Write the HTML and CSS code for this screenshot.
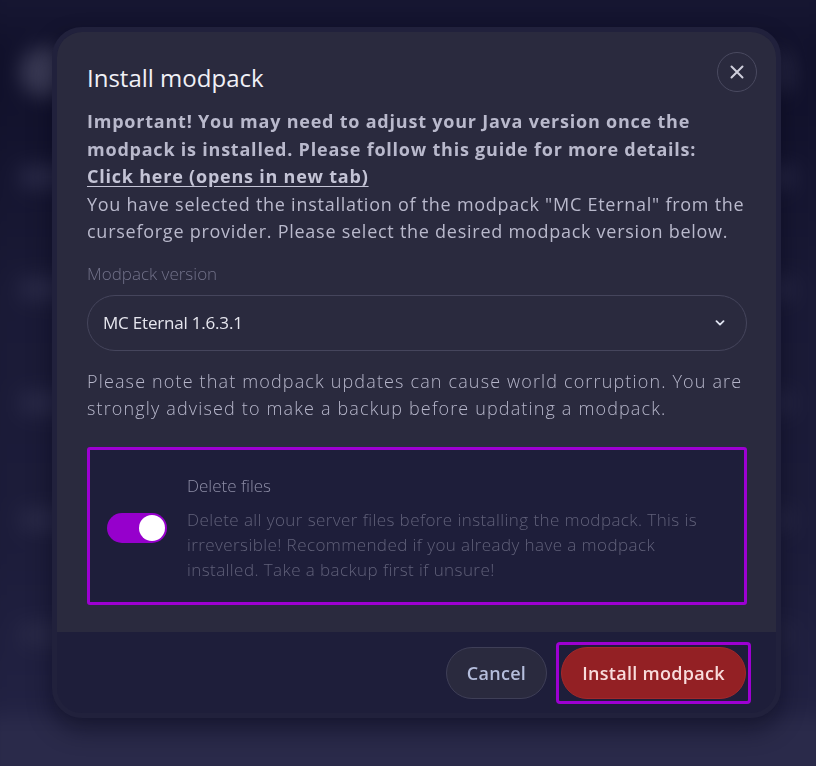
FILE: index.html
```html
<!DOCTYPE html>
<html lang="en">
<head>
<meta charset="utf-8">
<title>Install modpack</title>
<link rel="stylesheet" href="styles.css">
</head>
<body>
<div class="backdrop" aria-hidden="true">
  <div class="bg-row r1"><span class="blob b-circle"></span><span class="blob b-wide"></span></div>
  <div class="bg-row r2"><span class="blob b-line"></span><span class="blob b-line2"></span></div>
  <div class="bg-row r3"><span class="blob b-line"></span><span class="blob b-line2"></span></div>
  <div class="bg-row r4"><span class="blob b-line"></span><span class="blob b-line2"></span></div>
  <div class="bg-row r5"><span class="blob b-line"></span><span class="blob b-line2"></span></div>
  <div class="bg-row r6"><span class="blob b-line"></span><span class="blob b-line2"></span></div>
  <div class="bg-row r7"><span class="blob b-full"></span></div>
</div>

<div class="modal">
  <div class="modal-body">
    <div class="modal-head">
      <h2 class="title">Install modpack</h2>
      <button class="close" type="button" aria-label="Close">
        <svg width="14" height="14" viewBox="0 0 14 14"><path d="M1.5 1.5 L12.5 12.5 M12.5 1.5 L1.5 12.5" stroke="#cfcfdc" stroke-width="2" stroke-linecap="round"/></svg>
      </button>
    </div>
    <p class="info"><strong>Important! You may need to adjust your Java version once the modpack is installed. Please follow this guide for more details:<br><a href="#" class="link">Click here (opens in new tab)</a></strong><br>You have selected the installation of the modpack "MC Eternal" from the curseforge provider. Please select the desired modpack version below.</p>
    <label class="field-label">Modpack version</label>
    <div class="select">
      <span class="select-value">MC Eternal 1.6.3.1</span>
      <svg class="chevron" width="10" height="6" viewBox="0 0 10 6"><path d="M1.5 1.2 L5 4.6 L8.5 1.2" fill="none" stroke="#dfe3f0" stroke-width="1.8" stroke-linecap="round" stroke-linejoin="round"/></svg>
    </div>
    <p class="note">Please note that modpack updates can cause world corruption. You are strongly advised to make a backup before updating a modpack.</p>
    <div class="toggle-box">
      <span class="switch"><span class="knob"></span></span>
      <div class="toggle-text">
        <div class="toggle-title">Delete files</div>
        <div class="toggle-desc">Delete all your server files before installing the modpack. This is irreversible! Recommended if you already have a modpack installed. Take a backup first if unsure!</div>
      </div>
    </div>
  </div>
  <div class="modal-foot">
    <button class="btn cancel" type="button">Cancel</button>
    <span class="focus-ring"><button class="btn danger" type="button">Install modpack</button></span>
  </div>
</div>
</body>
</html>
```
FILE: styles.css
```css
* { box-sizing: border-box; }

html, body {
  margin: 0;
  height: 100%;
}

body {
  background: #13132d;
  font-family: "Open Sans", "Noto Sans", sans-serif;
  padding: 27px 0 0 52px;
  overflow: hidden;
}

/* blurred application behind the dialog */
.backdrop {
  position: fixed;
  inset: -20px;
  z-index: 0;
  display: flex;
  flex-direction: column;
  filter: blur(10px);
  background: linear-gradient(180deg, #181834 0%, #10102a 10%, #1a1a36 40%, #1c1c3a 70%, #242446 100%);
}
.bg-row {
  display: flex;
  align-items: center;
  gap: 40px;
  padding: 0 40px;
}
.r1 { height: 150px; padding-top: 40px; }
.r2 { height: 110px; }
.r3 { height: 125px; }
.r4 { height: 115px; }
.r5 { height: 130px; }
.r6 { height: 110px; }
.r7 { flex: 1; padding: 0; }
.blob { display: block; border-radius: 8px; background: #2c2c4a; }
.b-circle { width: 50px; height: 50px; border-radius: 50%; background: #3a3a55; }
.b-wide { flex: 1; height: 40px; background: #23233f; }
.b-line { width: 90px; height: 22px; background: #2a2a48; }
.b-line2 { flex: 1; height: 22px; background: #262644; }
.b-full { width: 100%; height: 70px; background: #2a2a4a; margin-top: 30px; }

/* dialog */
.modal {
  position: relative;
  z-index: 1;
  width: 729px;
  border: 5px solid #21213c;
  border-radius: 30px;
  background: #1e1e3a;
  overflow: hidden;
  box-shadow: 0 12px 24px rgba(5, 5, 20, 0.45);
}

.modal-body {
  background: #2a2a3e;
  padding: 20px 29px 27px 30px;
}

.modal-head {
  display: flex;
  justify-content: space-between;
  align-items: flex-start;
  margin-right: -10px;
}

.title {
  margin: 10px 0 0;
  font-family: "Open Sans", sans-serif;
  font-weight: 400;
  font-size: 24px;
  line-height: 32px;
  color: #f0f0f6;
}

.close {
  width: 40px;
  height: 40px;
  border-radius: 50%;
  border: 1px solid #4a4a60;
  background: transparent;
  display: flex;
  align-items: center;
  justify-content: center;
  padding: 0;
}

.info {
  margin: 14px 0 0;
  font-size: 18px;
  line-height: 27.5px;
  letter-spacing: 0.74px;
  color: #b9b9cc;
}
.info strong { font-weight: 700; letter-spacing: 0.78px; }
.link { color: #c4c4d6; text-decoration: underline; text-underline-offset: 3px; }

.field-label {
  display: block;
  margin-top: 17px;
  font-size: 17px;
  line-height: 22px;
  font-weight: 300;
  letter-spacing: 0;
  color: #72728a;
}

.select {
  margin-top: 10px;
  height: 56px;
  border: 1px solid #45455c;
  border-radius: 28px;
  display: flex;
  align-items: center;
  justify-content: space-between;
  padding: 0 21px 0 15px;
}
.select-value {
  font-size: 17px;
  letter-spacing: -0.2px;
  color: #e6e6ee;
}

.note {
  margin: 17px 0 0;
  font-size: 18px;
  line-height: 27px;
  font-weight: 300;
  letter-spacing: 1.15px;
  color: #b6b6ca;
}

.toggle-box {
  margin-top: 25px;
  border: 3px solid #9d00d2;
  border-radius: 3px;
  background: #1e1e3a;
  display: flex;
  align-items: center;
  gap: 20px;
  padding: 25px 38px 20px 17px;
}

.switch {
  flex: none;
  width: 60px;
  height: 30px;
  border-radius: 15px;
  background: #9600cc;
  display: flex;
  align-items: center;
  justify-content: flex-end;
  padding: 2px;
}
.knob {
  width: 26px;
  height: 26px;
  border-radius: 50%;
  background: #ffffff;
}

.toggle-title {
  font-size: 17px;
  line-height: 22px;
  font-weight: 300;
  letter-spacing: 0;
  color: #8d8da6;
}
.toggle-desc {
  margin-top: 10px;
  font-size: 17px;
  line-height: 25px;
  font-weight: 300;
  letter-spacing: 0.42px;
  color: #606079;
}

.modal-foot {
  display: flex;
  justify-content: flex-end;
  align-items: center;
  gap: 9px;
  padding: 10px 25px 9px 0;
}

.btn {
  height: 52px;
  border-radius: 26px;
  font-family: "Open Sans", sans-serif;
  font-size: 18px;
  font-weight: 600;
  letter-spacing: 0.3px;
  padding: 0 10px;
}
.cancel {
  width: 101px;
  background: #2a2a3e;
  border: 1px solid #3f3f57;
  color: #b5bedd;
}
.focus-ring {
  display: flex;
  border: 3px solid #9d00d2;
  border-radius: 4px;
  padding: 2px;
}
.danger {
  width: 185px;
  background: #932024;
  border: 1px solid #a3282b;
  color: #f8dcdc;
}
```
